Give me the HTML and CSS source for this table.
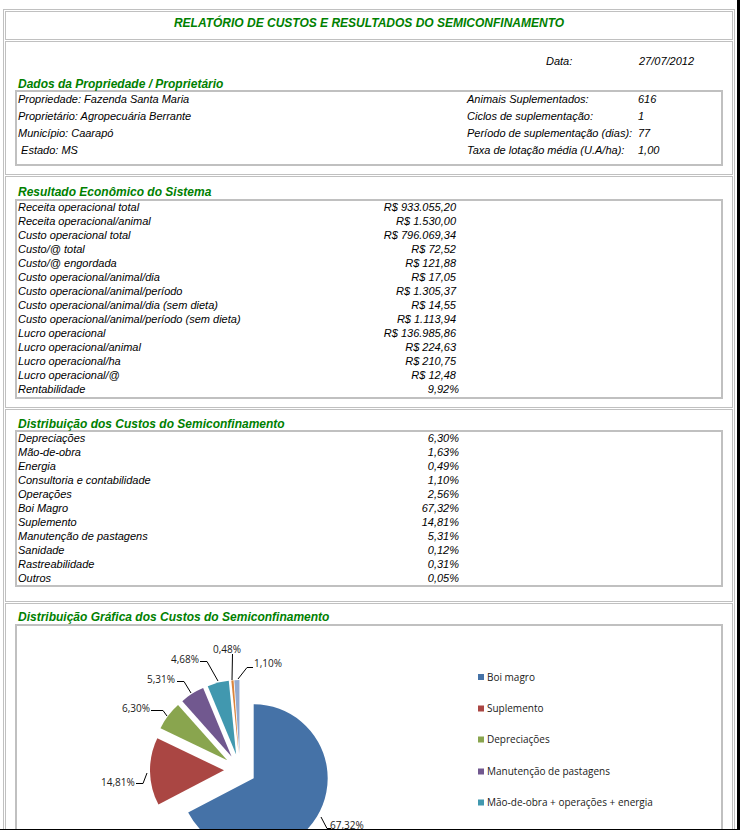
FILE: index.html
```html
<!DOCTYPE html>
<html lang="pt-BR">
<head>
<meta charset="utf-8">
<title>Relatório de Custos e Resultados do Semiconfinamento</title>
<link rel="stylesheet" href="styles.css">
</head>
<body>
<div class="frame">
  <div class="report">
    <div class="cell title">RELATÓRIO DE CUSTOS E RESULTADOS DO SEMICONFINAMENTO</div>

    <div class="cell sec sec1">
      <div class="date-row"><span class="date-label">Data:</span><span>27/07/2012</span></div>
      <div class="heading">Dados da Propriedade / Proprietário</div>
      <div class="box info">
        <span>Propriedade: Fazenda Santa Maria</span><span>Animais Suplementados:</span><span>616</span>
        <span>Proprietário: Agropecuária Berrante</span><span>Ciclos de suplementação:</span><span>1</span>
        <span>Município: Caarapó</span><span>Período de suplementação (dias):</span><span>77</span>
        <span>&nbsp;Estado: MS</span><span>Taxa de lotação média (U.A/ha):</span><span>1,00</span>
      </div>
    </div>

    <div class="cell sec sec2">
      <div class="heading">Resultado Econômico do Sistema</div>
      <div class="box list">
        <span>Receita operacional total</span><span class="val cur">R$ 933.055,20</span>
        <span>Receita operacional/animal</span><span class="val cur">R$ 1.530,00</span>
        <span>Custo operacional total</span><span class="val cur">R$ 796.069,34</span>
        <span>Custo/@ total</span><span class="val cur">R$ 72,52</span>
        <span>Custo/@ engordada</span><span class="val cur">R$ 121,88</span>
        <span>Custo operacional/animal/dia</span><span class="val cur">R$ 17,05</span>
        <span>Custo operacional/animal/período</span><span class="val cur">R$ 1.305,37</span>
        <span>Custo operacional/animal/dia (sem dieta)</span><span class="val cur">R$ 14,55</span>
        <span>Custo operacional/animal/período (sem dieta)</span><span class="val cur">R$ 1.113,94</span>
        <span>Lucro operacional</span><span class="val cur">R$ 136.985,86</span>
        <span>Lucro operacional/animal</span><span class="val cur">R$ 224,63</span>
        <span>Lucro operacional/ha</span><span class="val cur">R$ 210,75</span>
        <span>Lucro operacional/@</span><span class="val cur">R$ 12,48</span>
        <span>Rentabilidade</span><span class="val">9,92%</span>
      </div>
    </div>

    <div class="cell sec sec3">
      <div class="heading">Distribuição dos Custos do Semiconfinamento</div>
      <div class="box list">
        <span>Depreciações</span><span class="val">6,30%</span>
        <span>Mão-de-obra</span><span class="val">1,63%</span>
        <span>Energia</span><span class="val">0,49%</span>
        <span>Consultoria e contabilidade</span><span class="val">1,10%</span>
        <span>Operações</span><span class="val">2,56%</span>
        <span>Boi Magro</span><span class="val">67,32%</span>
        <span>Suplemento</span><span class="val">14,81%</span>
        <span>Manutenção de pastagens</span><span class="val">5,31%</span>
        <span>Sanidade</span><span class="val">0,12%</span>
        <span>Rastreabilidade</span><span class="val">0,31%</span>
        <span>Outros</span><span class="val">0,05%</span>
      </div>
    </div>

    <div class="cell sec sec4">
      <div class="heading">Distribuição Gráfica dos Custos do Semiconfinamento</div>
      <div class="box chart">
        <svg class="pie" width="703" height="240" viewBox="17 626 703 240" xmlns="http://www.w3.org/2000/svg">
          <path fill="#4572A7" d="M253.69 778.28 L253.69 704.28 A74 74 0 1 1 188.14 812.62 Z"/>
          <path fill="#AA4643" d="M224.00 770.28 L158.45 804.62 A74 74 0 0 1 157.30 738.22 Z"/>
          <path fill="#89A54E" d="M227.22 760.37 L160.52 728.31 A74 74 0 0 1 178.04 705.08 Z"/>
          <path fill="#71588F" d="M231.50 756.44 L182.32 701.15 A74 74 0 0 1 203.14 688.09 Z"/>
          <path fill="#4198AF" d="M236.10 754.48 L207.74 686.13 A74 74 0 0 1 228.77 680.84 Z"/>
          <path fill="#DB843D" d="M238.65 754.06 L231.32 680.42 A74 74 0 0 1 233.54 680.24 Z"/>
          <path fill="#93A9CF" d="M239.45 754.01 L234.34 680.19 A74 74 0 0 1 239.45 680.01 Z"/>

          <g class="leader" fill="none" stroke="#000" stroke-width="1">
            <polyline points="321,817 327,828.5 331,828.5"/>
            <polyline points="136,783.5 143,783.5 147,773"/>
            <polyline points="151,710.5 163,710.5 167,716"/>
            <polyline points="177,681.5 184,681.5 191,693"/>
            <polyline points="200,661.5 207,661.5 218,681"/>
            <polyline points="232.5,654 232,680"/>
            <polyline points="253,667.5 247,667.5 238,679"/>
          </g>

          <g class="labels">
            <text x="330" y="829">67,32%</text>
            <text x="101" y="786">14,81%</text>
            <text x="122" y="712">6,30%</text>
            <text x="147" y="683">5,31%</text>
            <text x="171" y="663">4,68%</text>
            <text x="213" y="653">0,48%</text>
            <text x="254" y="667">1,10%</text>
          </g>

          <g class="legend">
            <rect x="478" y="674" width="6" height="6" fill="#4572A7"/>
            <text x="487" y="680.5">Boi magro</text>
            <rect x="478" y="705.5" width="6" height="6" fill="#AA4643"/>
            <text x="487" y="712">Suplemento</text>
            <rect x="478" y="736.5" width="6" height="6" fill="#89A54E"/>
            <text x="487" y="743">Depreciações</text>
            <rect x="478" y="768.5" width="6" height="6" fill="#71588F"/>
            <text x="487" y="775">Manutenção de pastagens</text>
            <rect x="478" y="799.5" width="6" height="6" fill="#4198AF"/>
            <text x="487" y="806">Mão-de-obra + operações + energia</text>
          </g>
        </svg>
      </div>
    </div>
  </div>
</div>
</body>
</html>
```

FILE: styles.css
```css
html, body {
  margin: 0;
  padding: 0;
  background: #ffffff;
}

body {
  font-family: "Liberation Sans", Arial, sans-serif;
  color: #000;
}

.frame {
  width: 740px;
  height: 830px;
  box-sizing: border-box;
  border-right: 3px solid #000;
  border-bottom: 1px solid #000;
  overflow: hidden;
  padding: 9px 0 0 3px;
}

.report {
  width: 732px;
  box-sizing: border-box;
  border: 1px solid #c0c0c0;
  padding: 1px;
  display: flex;
  flex-direction: column;
  gap: 1px;
}

.cell {
  border: 1px solid #c0c0c0;
  padding: 0 9px;
}

.title {
  padding-top: 4px;
  padding-bottom: 9px;
  text-align: center;
  font-size: 12px;
  line-height: 14px;
  font-weight: bold;
  font-style: italic;
  color: #008000;
}

.heading {
  font-size: 12px;
  line-height: 12px;
  height: 12px;
  font-weight: bold;
  font-style: italic;
  color: #008000;
  padding-left: 3px;
}

.box {
  border: 2px solid #c0c0c0;
  font-size: 11px;
  font-style: italic;
}

.sec1 {
  padding-top: 11px;
  padding-bottom: 8px;
}

.date-row {
  display: flex;
  font-size: 11px;
  font-style: italic;
  line-height: 17px;
  padding-left: 531px;
  margin-bottom: 8px;
}

.date-label {
  width: 93px;
}

.info {
  display: grid;
  grid-template-columns: 449px 171px 1fr;
  padding-bottom: 4px;
}

.info span {
  line-height: 13px;
  padding: 1px 0 3px 1px;
  white-space: nowrap;
}

.sec2 {
  padding-top: 9px;
  padding-bottom: 8px;
}

.sec2 .box,
.sec4 .box {
  margin-top: 1px;
}

.sec3 {
  padding-top: 8px;
  padding-bottom: 14px;
}

.sec3 .box {
  margin-top: 0;
}

.sec4 {
  padding-top: 7px;
}

.list {
  display: grid;
  grid-template-columns: 280px 162px 1fr;
}

.list span {
  line-height: 12px;
  padding: 0 0 2px 1px;
  white-space: nowrap;
}

.list span:nth-child(2n+1) {
  grid-column: 1;
}

.list .val {
  text-align: right;
  padding-right: 0;
}

.list .val.cur {
  padding-right: 3px;
}

.sec3 .list span:nth-last-child(-n+2) {
  padding-bottom: 1px;
}

.chart {
  height: 240px;
  font-style: normal;
}

.pie {
  display: block;
}

.labels text,
.legend text {
  font-family: "Open Sans", "DejaVu Sans", sans-serif;
  font-size: 10px;
  font-style: normal;
  fill: #1a1a1a;
}
```
